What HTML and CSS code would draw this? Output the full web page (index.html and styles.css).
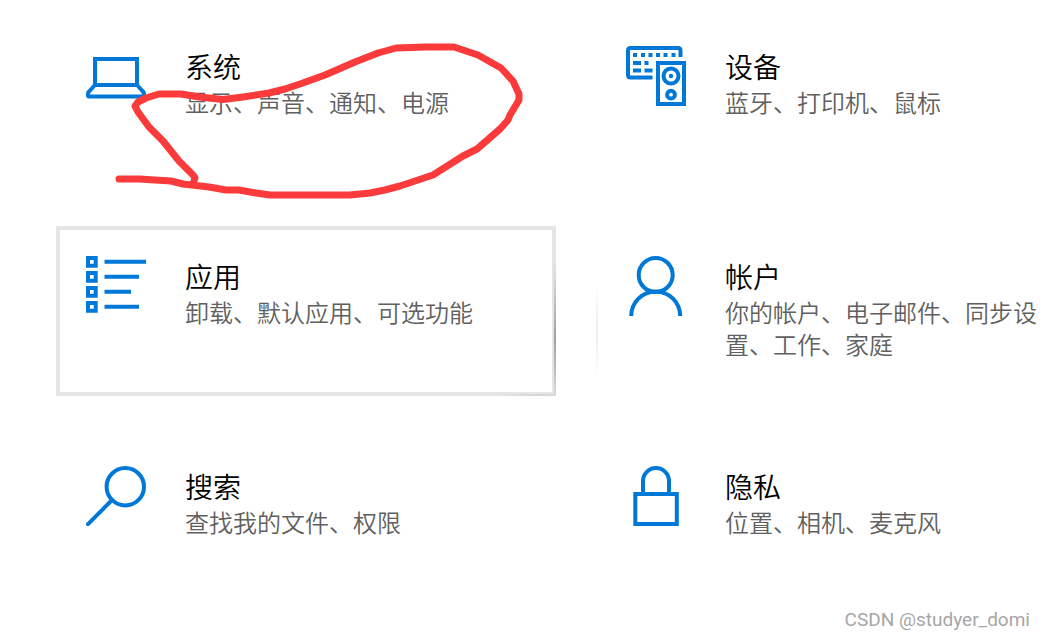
FILE: index.html
```html
<!DOCTYPE html>
<html lang="zh-CN">
<head>
    <meta charset="UTF-8">
    <meta name="viewport" content="width=device-width, initial-scale=1.0">
    <title>设置</title>
    <link rel="stylesheet" href="styles.css">
</head>
<body>
    <main class="settings">
        <a class="tile" href="#system">
            <svg class="icon" viewBox="0 0 60 60" aria-hidden="true">
                <path d="M9 13H51V39H9z"/>
                <path class="round" d="M9 39L3 45.5Q2 46.5 2 48V49.5Q2 50.5 3 50.5H57Q58 50.5 58 49.5V48Q58 46.5 57 45.5L51 39"/>
            </svg>
            <div class="text">
                <h2 class="title">系统</h2>
                <p class="desc">显示、声音、通知、电源</p>
            </div>
            <svg class="scribble" viewBox="60 20 470 190" aria-hidden="true">
                <path d="M119 179L139 179L171 181L183 184L209 187L226 190L239 190L256 193L270 195L350 195L370 193L385 190L400 186L433 175L463 156L477 149L500 129L508 120L510 115L519 100V94L513 81L501 68L478 55L454 47H425L396 48L378 53L355 62L325 75L300 84L285 89L269 93L243 97L223 99.5L199 97L181 94H159L146 98L138 102L135 106L138 112L149 127L163 141L179 161L193 175L195 178L194 181"/>
            </svg>
        </a>

        <a class="tile" href="#devices">
            <svg class="icon" viewBox="0 0 60 60" aria-hidden="true">
                <path d="M26.5 31.5H4.5Q2 31.5 2 29V4.5Q2 2 4.5 2H52Q54.5 2 54.5 4.5V11"/>
                <path d="M7 9h4M15 9h4M22.5 9h4M30 9h4M37.5 9h4M45.5 9h4M7 17h8M18.5 17h4M7 24.5h8M18.5 24.5h8"/>
                <path d="M32 17H58V58H32z"/>
                <circle cx="45" cy="30" r="7.5"/>
                <circle class="solid" cx="45" cy="30" r="2.2"/>
                <circle cx="45" cy="48.7" r="3.9"/>
            </svg>
            <div class="text">
                <h2 class="title">设备</h2>
                <p class="desc">蓝牙、打印机、鼠标</p>
            </div>
        </a>

        <a class="tile active" href="#apps">
            <svg class="icon" viewBox="0 0 60 60" aria-hidden="true">
                <path d="M2 2h7.7v7.7H2zM2 17h7.7v7.7H2zM2 32h7.7v7.7H2zM2 47h7.7v7.7H2z"/>
                <path d="M18.5 5.7H60M18.5 20.7H53M18.5 35.7H45M18.5 50.7H53"/>
            </svg>
            <div class="text">
                <h2 class="title">应用</h2>
                <p class="desc">卸载、默认应用、可选功能</p>
            </div>
        </a>

        <a class="tile near" href="#accounts">
            <svg class="icon" viewBox="0 0 60 60" aria-hidden="true">
                <circle cx="29.7" cy="19" r="17"/>
                <path d="M5.2 60A24.5 24.5 0 0 1 54.2 60"/>
            </svg>
            <div class="text">
                <h2 class="title">帐户</h2>
                <p class="desc">你的帐户、电子邮件、同步设置、工作、家庭</p>
            </div>
        </a>

        <a class="tile" href="#search">
            <svg class="icon" viewBox="0 0 60 60" aria-hidden="true">
                <circle cx="39.3" cy="20.7" r="18.7"/>
                <path class="round" d="M2 58.2L26 34"/>
            </svg>
            <div class="text">
                <h2 class="title">搜索</h2>
                <p class="desc">查找我的文件、权限</p>
            </div>
        </a>

        <a class="tile" href="#privacy">
            <svg class="icon" viewBox="0 0 60 60" aria-hidden="true">
                <path d="M9.3 28H50.8V58H9.3z"/>
                <path d="M17 28V15A13 13 0 0 1 43 15V28"/>
            </svg>
            <div class="text">
                <h2 class="title">隐私</h2>
                <p class="desc">位置、相机、麦克风</p>
            </div>
        </a>
    </main>

    <footer class="watermark">CSDN @studyer_domi</footer>
</body>
</html>
```

FILE: styles.css
```css
* {
    box-sizing: border-box;
}
body {
    margin: 0;
    background: #fff;
    font-family: "Noto Sans CJK SC", sans-serif;
}
.settings {
    display: grid;
    grid-template-columns: minmax(0, 500px) minmax(0, 1fr);
    gap: 40px;
    padding: 16px 0 0 56px;
}
.tile {
    position: relative;
    display: flex;
    align-items: flex-start;
    gap: 39px;
    min-height: 170px;
    padding: 26px 0 26px 26px;
    border: 4px solid transparent;
    color: #000;
    text-decoration: none;
}
.icon {
    flex: none;
    width: 60px;
    height: 60px;
    fill: none;
    stroke: #0078d7;
    stroke-width: 4;
}
.icon .solid {
    fill: #0078d7;
    stroke: none;
}
.icon .round {
    stroke-linecap: round;
}
.text {
    padding-top: 2px;
}
.title {
    margin: 0 0 2px;
    font-size: 28px;
    font-weight: 350;
    line-height: 36px;
}
.desc {
    margin: 0;
    color: #606060;
    font-size: 24px;
    font-weight: 350;
    line-height: 32px;
}

/* hovered tile, with the light falling on its lower right edge */
.tile.active {
    border-color: #e5e5e5;
}
.tile.active::before,
.tile.active::after,
.tile.near::before {
    content: "";
    position: absolute;
}
.tile.active::before {
    top: 32px;
    right: -4px;
    bottom: -4px;
    width: 2px;
    background: linear-gradient(#e5e5e5, #a0a0a0 55%, #a8a8a8 65%, #dadada);
}
.tile.active::after {
    right: -4px;
    bottom: -4px;
    width: 60px;
    height: 2px;
    background: linear-gradient(to right, #e5e5e5, #d4d4d4 70%, #dadada);
}
.tile.near::before {
    top: 54px;
    left: -4px;
    width: 2px;
    height: 94px;
    background: linear-gradient(#fff, #ececec 50%, #fff);
}

/* red pen mark */
.scribble {
    position: absolute;
    top: 0;
    left: 0;
    width: 470px;
    height: 190px;
    fill: none;
    stroke: #fb3b3b;
    stroke-width: 7;
    stroke-linecap: round;
    stroke-linejoin: round;
    pointer-events: none;
}
.watermark {
    padding-right: 14px;
    color: #a6a6a6;
    font-family: Roboto, Arial, sans-serif;
    font-size: 19px;
    line-height: 28px;
    text-align: right;
}
```
